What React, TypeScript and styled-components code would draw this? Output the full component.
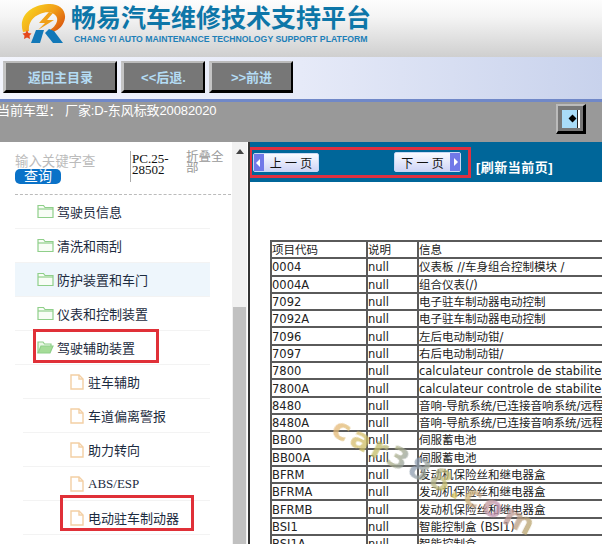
import * as React from 'react'
import styled, { createGlobalStyle } from 'styled-components'

const CJK = '"Liberation Sans", "Noto Sans CJK SC", sans-serif'
const SERIF = '"Liberation Serif", "Noto Sans CJK SC", serif'
const TABLE_FONT = '"DejaVu Sans", "Noto Sans CJK SC", sans-serif'

const rows = [
  ['0004', 'null', '仪表板 //车身组合控制模块 /'],
  ['0004A', 'null', '组合仪表(/)'],
  ['7092', 'null', '电子驻车制动器电动控制'],
  ['7092A', 'null', '电子驻车制动器电动控制'],
  ['7096', 'null', '左后电动制动钳/'],
  ['7097', 'null', '右后电动制动钳/'],
  ['7800', 'null', 'calculateur controle de stabilite'],
  ['7800A', 'null', 'calculateur controle de stabilite'],
  ['8480', 'null', '音响-导航系统/已连接音响系统/远程信息'],
  ['8480A', 'null', '音响-导航系统/已连接音响系统/远程信息'],
  ['BB00', 'null', '伺服蓄电池'],
  ['BB00A', 'null', '伺服蓄电池'],
  ['BFRM', 'null', '发动机保险丝和继电器盒'],
  ['BFRMA', 'null', '发动机保险丝和继电器盒'],
  ['BFRMB', 'null', '发动机保险丝和继电器盒'],
  ['BSI1', 'null', '智能控制盒 (BSI1)'],
  ['BSI1A', 'null', '智能控制盒'],
]

const folders = [
  { label: '驾驶员信息' },
  { label: '清洗和雨刮' },
  { label: '防护装置和车门', hover: true },
  { label: '仪表和控制装置' },
  { label: '驾驶辅助装置', open: true, marked: true },
]

const files = [
  { label: '驻车辅助' },
  { label: '车道偏离警报' },
  { label: '助力转向' },
  { label: 'ABS/ESP' },
  { label: '电动驻车制动器', marked: true },
]

function Logo() {
  return (
    <svg width="46" height="42" viewBox="0 0 46 42">
      <defs>
        <linearGradient id="ring" x1="0" y1="0.2" x2="1" y2="0.8">
          <stop offset="0" stopColor="#f8d820" />
          <stop offset="0.55" stopColor="#f2a018" />
          <stop offset="1" stopColor="#d8520f" />
        </linearGradient>
      </defs>
      <path
        d="M3 29C-2 14 10 2 28 1c10-1 18 5 17 14-1 7-6 12-12 14l-3-2c5-3 8-8 7-12-2-6-10-7-17-4C12 14 8 21 9 28z"
        fill="url(#ring)"
      />
      <path d="M29 9L19 20h6l-7 7 16-10h-7l6-7z" fill="#f0a018" />
      <path d="M7 27l1.500 3 3 .5-2 2.200.5 3.300-3-1.500-3 1.500.5-3.300-2-2.200 3-.5z" fill="#e4481c" />
      <path d="M11 40l5-13h8l-4 13z" fill="#1278b8" />
      <path d="M25 30l4-4 5 2 9 12H33z" fill="#1278b8" />
    </svg>
  )
}

function FolderIcon(props: { open?: boolean }) {
  return (
    <svg width="17" height="15" viewBox="0 0 17 15" fill="none" stroke="#8fcf8a" strokeWidth="1.2">
      {props.open ? (
        <>
          <path d="M1 13V2h5l1.500 2H14v2" fill="#eaf7e6" />
          <path d="M1 13l3-7h12l-3 7z" fill="#a5dc98" />
        </>
      ) : (
        <>
          <path d="M1 13.500V1.500h5.500L8 3.500h8v10z" fill="#f8fdf6" />
          <path d="M1 5h15" />
        </>
      )}
    </svg>
  )
}

function FileIcon() {
  return (
    <svg width="14" height="16" viewBox="0 0 14 16" fill="none" stroke="#f3cfa4" strokeWidth="1.4">
      <path d="M1 1h8l4 4v10H1z" />
      <path d="M9 1v4h4" />
    </svg>
  )
}

export default function App() {
  return (
    <Page>
      <GlobalStyle />
      <Banner>
        <Logo />
        <BrandText>
          <h1>畅易汽车维修技术支持平台</h1>
          <p>CHANG YI AUTO MAINTENANCE TECHNOLOGY SUPPORT PLATFORM</p>
        </BrandText>
      </Banner>

      <NavBar>
        <NavButton $width={114}>返回主目录</NavButton>
        <NavButton $width={84}>&lt;&lt;后退.</NavButton>
        <NavButton $width={84}>&gt;&gt;前进</NavButton>
      </NavBar>

      <ModelBar>
        <ModelText>当前车型： 厂家:D-东风标致20082020</ModelText>
        <ToggleButton>
          <span />
        </ToggleButton>
      </ModelBar>

      <Body>
        <Sidebar>
          <TreePane>
            <SearchRow>
              <SearchBox>
                <div className="hint">输入关键字查</div>
                <div className="submit">查询</div>
              </SearchBox>
              <ModelCode>PC.25-28502</ModelCode>
              <CollapseAll>折叠全部</CollapseAll>
            </SearchRow>
            <Tree>
              {folders.map((f) => (
                <FolderRow key={f.label} $hover={f.hover}>
                  <FolderMark $on={f.marked}>
                    <FolderIcon open={f.open} />
                    <span>{f.label}</span>
                  </FolderMark>
                </FolderRow>
              ))}
              {files.map((f) => (
                <FileRow key={f.label}>
                  <FileMark $on={f.marked}>
                    <FileIcon />
                    <span>{f.label}</span>
                  </FileMark>
                </FileRow>
              ))}
            </Tree>
          </TreePane>
          <Scrollbar>
            <div className="arrow" />
            <div className="thumb" />
          </Scrollbar>
        </Sidebar>

        <Content>
          <PagerBar>
            <PagerFrame>
              <PagerButton>
                <i className="left" />
                <b>上 一 页</b>
              </PagerButton>
              <PagerButton $raised>
                <b>下 一 页</b>
                <i className="right" />
              </PagerButton>
            </PagerFrame>
            <Refresh>[刷新当前页]</Refresh>
          </PagerBar>
          <TableArea>
            <CodeTable>
              <colgroup>
                <col style={{ width: 96 }} />
                <col style={{ width: 51 }} />
                <col style={{ width: 330 }} />
              </colgroup>
              <tbody>
                <tr>
                  <td>项目代码</td>
                  <td>说明</td>
                  <td>信息</td>
                </tr>
                {rows.map((r) => (
                  <tr key={r[0]}>
                    {r.map((c, i) => (
                      <td key={i}>{c}</td>
                    ))}
                  </tr>
                ))}
              </tbody>
            </CodeTable>
            <Watermark>car388.com</Watermark>
          </TableArea>
        </Content>
      </Body>
    </Page>
  )
}

const GlobalStyle = createGlobalStyle`
  html, body {
    margin: 0;
    padding: 0;
    background: #fff;
    overflow: hidden;
  }
  * {
    box-sizing: border-box;
  }
`

const Page = styled.div`
  width: 602px;
  height: 544px;
  overflow: hidden;
  font-family: ${CJK};
  display: flex;
  flex-direction: column;
`

const Banner = styled.div`
  height: 57px;
  flex: none;
  display: flex;
  align-items: flex-start;
  gap: 5px;
  padding: 3px 0 0 20px;
  background: linear-gradient(#fdfdfd, #f4f4f4 30%, #cfcfcf);
`

const BrandText = styled.div`
  white-space: nowrap;

  h1 {
    margin: 0;
    font-size: 25px;
    line-height: 30px;
    font-weight: 700;
    color: #0d76a8;
  }

  p {
    margin: 1px 0 0 3px;
    font-size: 8.7px;
    line-height: 10px;
    font-weight: 700;
    color: #1d7fb8;
  }
`

const NavBar = styled.div`
  height: 45px;
  flex: none;
  display: flex;
  gap: 4px;
  padding: 4px 0 0 3px;
  background: linear-gradient(90deg, #f3f5fd, #e6eaf8 50%, #c8d2ec);
  border-bottom: 3px solid #7088c8;
`

const NavButton = styled.div<{ $width: number }>`
  width: ${(p) => p.$width}px;
  height: 32px;
  display: flex;
  align-items: center;
  justify-content: center;
  background: #777;
  border-style: solid;
  border-width: 2px 2px 3px 3px;
  border-color: #bbb #000 #000 #c4c4c4;
  color: #b4dcf4;
  font-size: 13px;
  font-weight: 700;
`

const ModelBar = styled.div`
  height: 40px;
  flex: none;
  display: flex;
  justify-content: space-between;
  padding-right: 16px;
  background: #999;
`

const ModelText = styled.div`
  margin: 1px 0 0 -3px;
  color: #fff;
  font-size: 13px;
  letter-spacing: -0.1px;
  line-height: 16px;
  white-space: nowrap;
`

const ToggleButton = styled.div`
  width: 30px;
  height: 30px;
  margin-top: 2px;
  display: flex;
  align-items: center;
  justify-content: center;
  background: #777;
  border-style: solid;
  border-width: 2px 3px 3px 2px;
  border-color: #bbb #000 #000 #bbb;

  span {
    width: 18px;
    height: 18px;
    background: linear-gradient(90deg, #a9dcf8 0 15px, #222 15px 16px, #fff 16px);
    position: relative;
  }

  span::after {
    content: '';
    position: absolute;
    left: 7px;
    top: 5px;
    width: 7px;
    height: 7px;
    background: #000;
    transform: rotate(45deg) scale(0.8);
  }
`

const Body = styled.div`
  flex: 1;
  min-height: 0;
  display: flex;
`

const Sidebar = styled.div`
  width: 248px;
  flex: none;
  display: flex;
  padding-right: 2px;
  overflow: hidden;
`

const TreePane = styled.div`
  width: 231px;
  flex: none;
  padding: 9px 0 0 15px;
`

const SearchRow = styled.div`
  display: flex;
  height: 44px;
  border-bottom: 1px dashed #bbb;
`

const SearchBox = styled.div`
  width: 115px;
  flex: none;
  padding-top: 4px;

  .hint {
    font-size: 13.4px;
    line-height: 14px;
    color: #bbb;
    white-space: nowrap;
  }

  .submit {
    width: 46px;
    height: 15px;
    border-radius: 5px;
    background: #0a72c8;
    color: #fff;
    font-size: 14px;
    line-height: 15px;
    text-align: center;
  }
`

const ModelCode = styled.div`
  width: 56px;
  height: 31px;
  flex: none;
  padding: 2px 0 0 1px;
  border-left: 1px solid #aaa;
  font-family: ${SERIF};
  font-size: 13px;
  line-height: 11px;
  color: #111;
`

const CollapseAll = styled.div`
  width: 40px;
  padding-top: 1px;
  font-size: 12.5px;
  line-height: 11px;
  color: #999;
`

const Tree = styled.div`
  display: flex;
  flex-direction: column;
`

const Row = styled.div`
  width: 195px;
  height: 34px;
  display: flex;
  align-items: center;
  color: #1c2b40;
  font-size: 13px;
  font-family: ${SERIF};
  white-space: nowrap;
  border-bottom: 1px solid #f3f3f3;
`

const FolderRow = styled(Row)<{ $hover?: boolean }>`
  padding-left: 22px;
  background: ${(p) => (p.$hover ? '#eef6fc' : 'transparent')};
`

const FileRow = styled(Row)`
  width: 187px;
  margin-left: 8px;
  padding-left: 47px;
`

const Mark = styled.div<{ $on?: boolean }>`
  display: flex;
  align-items: center;
  position: relative;

  &::after {
    content: '';
    display: ${(p) => (p.$on ? 'block' : 'none')};
    position: absolute;
    border: 3px solid #e03038;
  }
`

const FolderMark = styled(Mark)`
  gap: 3px;

  &::after {
    left: -4px;
    right: -24px;
    top: -9px;
    bottom: -6px;
  }
`

const FileMark = styled(Mark)`
  gap: 4px;

  &::after {
    left: -10px;
    right: -15px;
    top: -13px;
    bottom: -4px;
  }
`

const Scrollbar = styled.div`
  width: 15px;
  flex: none;
  margin-left: 1px;
  background: #f1f1f1;
  position: relative;

  .arrow {
    width: 0;
    height: 0;
    margin: 7px auto 0;
    border: 4px solid transparent;
    border-top: 0;
    border-bottom: 5px solid #444;
  }

  .thumb {
    position: absolute;
    left: 1px;
    right: 1px;
    top: 165px;
    bottom: 0;
    background: #c1c1c1;
  }
`

const Content = styled.div`
  flex: 1;
  min-width: 0;
  border-left: 2px solid #333;
  display: flex;
  flex-direction: column;
  overflow: hidden;
`

const PagerBar = styled.div`
  height: 40px;
  flex: none;
  display: flex;
  background: #006699;
  padding-top: 5px;
`

const PagerFrame = styled.div`
  width: 222px;
  height: 31px;
  margin: 0 5px 0 -1px;
  display: flex;
  justify-content: space-between;
  align-items: flex-start;
  padding: 3px 7px 0 1px;
  border: 3px solid #e03040;
`

const PagerButton = styled.div<{ $raised?: boolean }>`
  width: ${(p) => (p.$raised ? '67px' : '66px')};
  height: ${(p) => (p.$raised ? '20px' : '19px')};
  margin-top: ${(p) => (p.$raised ? '-1px' : '0')};
  display: flex;
  align-items: center;
  background: linear-gradient(#fafbff, #cfd5f6);
  border: 1px solid #c8d8f4;
  border-radius: 2px;

  b {
    flex: 1;
    font-weight: 400;
    font-size: 12px;
    text-align: center;
    color: #111;
    white-space: nowrap;
  }

  i {
    width: 10px;
    height: 100%;
    background: #7078e8;
    position: relative;
  }

  i::after {
    content: '';
    position: absolute;
    top: 5px;
    border: 4px solid transparent;
  }

  i.left::after {
    left: -2px;
    border-right-color: #fff;
  }

  i.right::after {
    left: 4px;
    border-left-color: #fff;
  }
`

const Refresh = styled.div`
  margin-top: 13px;
  color: #fff;
  font-size: 13px;
  letter-spacing: 0.5px;
  font-weight: 700;
  line-height: 16px;
  white-space: nowrap;
`

const TableArea = styled.div`
  flex: 1;
  position: relative;
  padding: 58px 0 0 20px;
  background: #fff;
`

const CodeTable = styled.table`
  border-collapse: collapse;
  table-layout: fixed;
  width: 477px;
  font-family: ${TABLE_FONT};
  font-size: 11.5px;
  color: #222;

  td {
    border: 2px solid #5a5a5a;
    height: 17.3px;
    padding: 1px 0 0;
    line-height: 14px;
    white-space: nowrap;
    overflow: hidden;
  }
`

const Watermark = styled.div`
  position: absolute;
  left: 84px;
  top: 226px;
  transform: rotate(27deg);
  transform-origin: left center;
  font-family: "DejaVu Sans", sans-serif;
  font-size: 30px;
  font-weight: 700;
  letter-spacing: 3px;
  white-space: nowrap;
  color: transparent;
  background: linear-gradient(90deg, #e8b878, #c8c060 20%, #8a9ab0 40%, #d8c858 60%, #c090b0 80%, #b8a860);
  background-clip: text;
  -webkit-background-clip: text;
  opacity: 0.75;
  filter: blur(0.5px);
`
